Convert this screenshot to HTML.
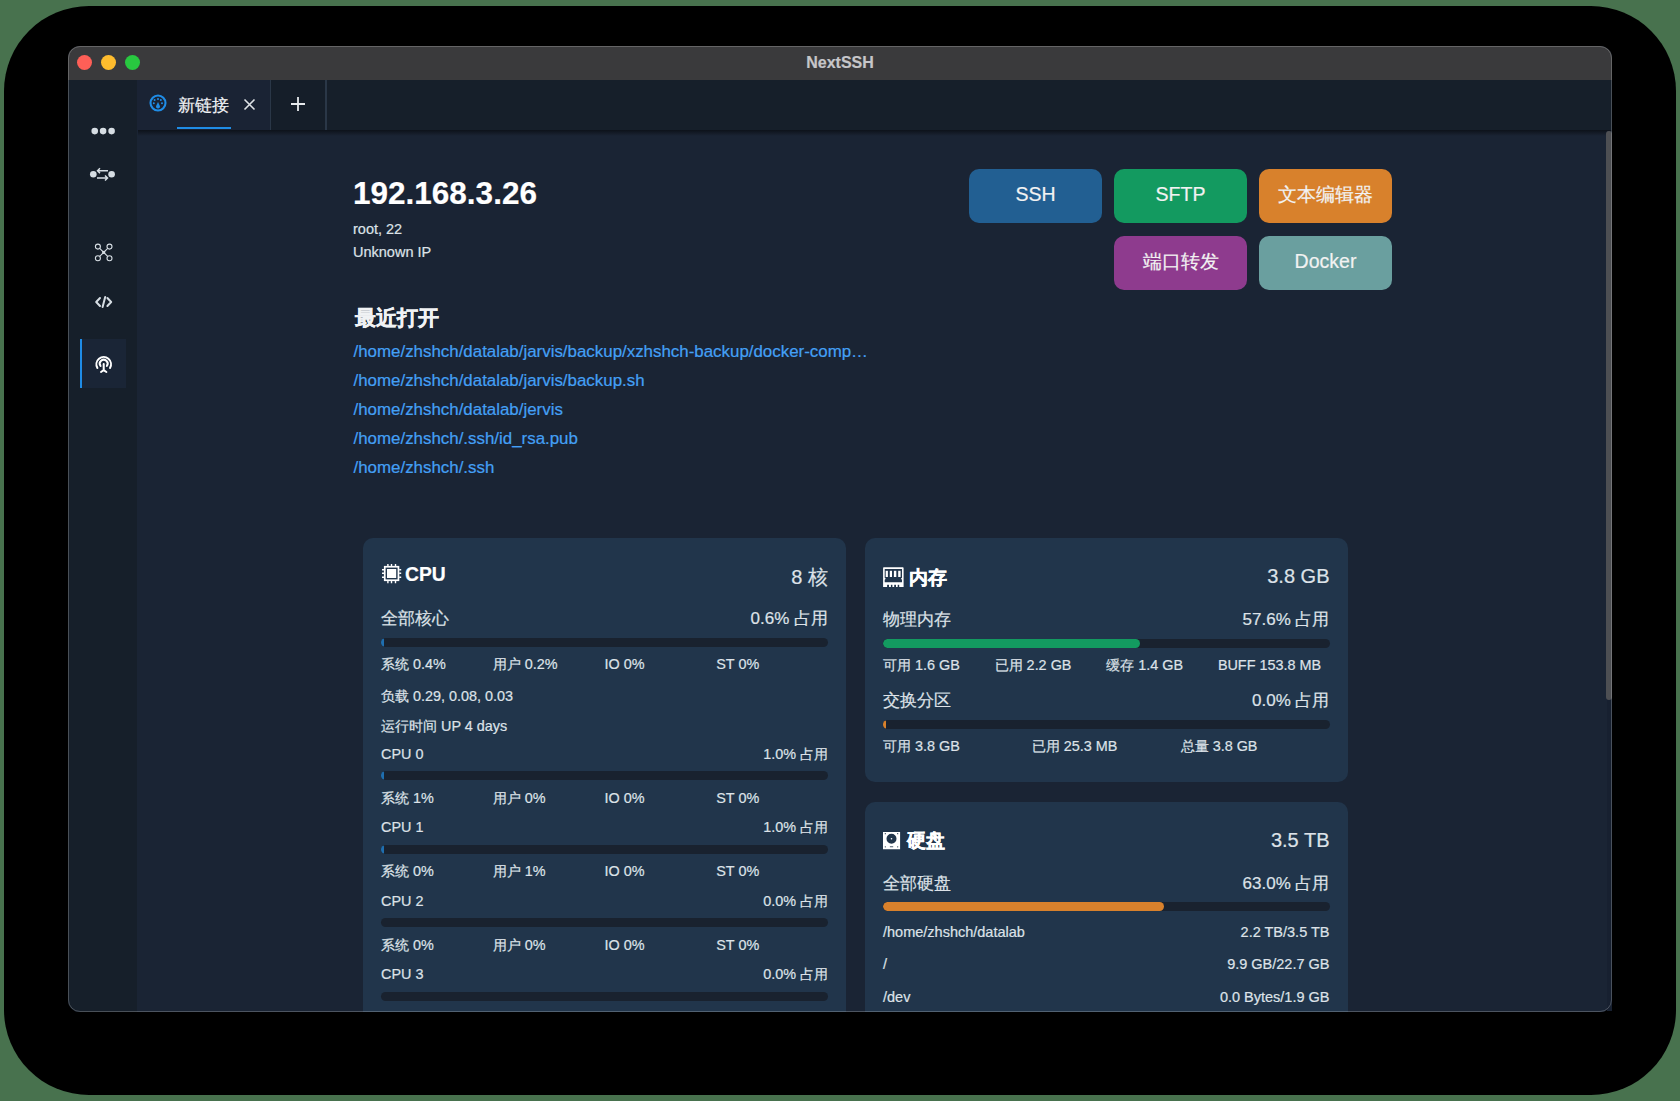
<!DOCTYPE html>
<html><head><meta charset="utf-8">
<style>
*{box-sizing:border-box;margin:0;padding:0}
html,body{width:1680px;height:1101px;overflow:hidden}
body{background:#48724e;font-family:"Liberation Sans",sans-serif;position:relative;color:#dde2e8}
#win div{-webkit-text-stroke:0.2px currentColor}
.abs{position:absolute}
#shadow{left:4px;top:6px;width:1672px;height:1089px;border-radius:85px;background:#000}
#win{left:68px;top:46px;width:1544px;height:966px;border-radius:12px;overflow:hidden;background:#1a2434}
#winborder{left:68px;top:46px;width:1544px;height:966px;border-radius:12px;border:1px solid rgba(255,255,255,0.22);pointer-events:none}
#titlebar{left:0;top:0;width:100%;height:35px;background:#3a3a3c;border-bottom:1px solid #1c1c1e}
.tl{width:15px;height:15px;border-radius:50%;top:9.1px}
#title{left:0;width:100%;top:8px;text-align:center;font-weight:bold;font-size:16px;line-height:18px;color:#c6c6c9}
#sidebar{left:0;top:34px;width:69.5px;height:932px;background:#161f2a}
#tabbar{left:69px;top:34px;width:1475px;height:50px;background:#161f2a}
#main{left:69px;top:84px;width:1475px;height:882px;background:#1a2434}
.tab1{left:0;top:0;width:134px;height:50px;background:#1a2334}
.sep{top:0;width:1.5px;height:50px;background:#2a3747}
.tabtext{left:41px;top:15.5px;font-size:17px;line-height:20px;color:#f0f2f4}
.uline{left:40px;top:47px;width:54px;height:2px;background:#1f8ce6}
.tabshadow{left:69.5px;top:84px;width:1475px;height:6px;background:linear-gradient(rgba(0,0,0,0.5),rgba(0,0,0,0.25) 50%,rgba(0,0,0,0))}
.sbicon{left:0;width:69px;text-align:center}
.active{left:11.6px;top:258.6px;width:46px;height:49px;background:#1a2536}
.activebar{left:11.6px;top:258.6px;width:2.5px;height:49px;background:#1f8ce6}
/* content */
.host{left:285px;top:129px;font-size:31.5px;font-weight:bold;color:#fff;line-height:36px}
.sub{left:285px;font-size:14.5px;color:#dde2e8;line-height:18px}
.btn{width:133px;height:54px;border-radius:10px;color:#f2f2f2;font-size:19.5px;text-align:center;line-height:51.5px}
.recent{left:286.9px;top:260.3px;font-size:21px;font-weight:bold;color:#f0f2f4;line-height:24px}
.link{left:285.5px;font-size:16.9px;color:#44a0f6;line-height:20px;white-space:nowrap}
.card{background:#21354b;border-radius:10px}
.row{position:absolute;left:18px;right:18px;display:flex;justify-content:space-between;white-space:nowrap}
.ctitle{font-size:19.3px;font-weight:bold;color:#fff;line-height:24px}
.cval{font-size:20px;color:#dde2e8;line-height:24px;position:relative;top:1.5px}
.lbl{font-size:17px;line-height:20px;color:#dde2e8;margin-top:1px}
.bar{position:absolute;left:18px;right:18px;height:9px;border-radius:5px;background:#19222f;overflow:hidden}
.fill{position:absolute;left:0;top:0;height:100%;border-radius:5px}
.grid{position:absolute;left:18px;right:18px;display:flex;font-size:14.4px;line-height:18px;color:#dde2e8;white-space:nowrap}
.grid4>div{width:25%}
.grid3>div{width:33.333%}
.sm{font-size:14.4px;line-height:18px;color:#dde2e8}
.disk{font-size:14.5px;line-height:18px}
.cjkb{-webkit-text-stroke:0.35px currentColor}
</style></head><body>
<div id="shadow" class="abs"></div>
<div id="win" class="abs">
  <div id="titlebar" class="abs">
    <div class="abs tl" style="left:8.9px;background:#fe5f57"></div>
    <div class="abs tl" style="left:33.1px;background:#febc2e"></div>
    <div class="abs tl" style="left:57.2px;background:#28c840"></div>
    <div id="title" class="abs">NextSSH</div>
  </div>
  <div id="sidebar" class="abs">
    <!-- dots -->
    <svg class="abs" style="left:20px;top:44px" width="30" height="14" viewBox="0 0 30 14">
      <circle cx="6.75" cy="7.1" r="3.3" fill="#d6dde3"/><circle cx="15.1" cy="7.1" r="3.3" fill="#d6dde3"/><circle cx="23.6" cy="7.1" r="3.3" fill="#d6dde3"/>
    </svg>
    <!-- transfer -->
    <svg class="abs" style="left:20px;top:85px" width="30" height="20" viewBox="0 0 30 20">
      <circle cx="5.3" cy="9.3" r="3.3" fill="#d6dde3"/><circle cx="23.6" cy="9.3" r="3.3" fill="#d6dde3"/>
      <path d="M9.5 5.7H20M12 3.2L9.5 5.7L12 8.2" stroke="#d6dde3" stroke-width="1.5" fill="none"/>
      <path d="M9 13H19.5M17 10.5L19.5 13L17 15.5" stroke="#d6dde3" stroke-width="1.5" fill="none"/>
    </svg>
    <!-- network -->
    <svg class="abs" style="left:20px;top:153px" width="30" height="30" viewBox="0 0 30 30">
      <g stroke="#d6dde3" stroke-width="1.1" fill="none">
      <circle cx="9.9" cy="13.6" r="2.5"/><circle cx="21.5" cy="13.6" r="2.5"/><circle cx="9.9" cy="25.2" r="2.5"/><circle cx="21.5" cy="25.2" r="2.5"/>
      <path d="M11.7 15.4L19.7 23.4M19.7 15.4L11.7 23.4"/></g>
      <rect x="14.2" y="17.9" width="3" height="3" fill="#d6dde3"/>
    </svg>
    <!-- code -->
    <svg class="abs" style="left:18px;top:206px" width="30" height="30" viewBox="0 0 30 30">
      <g stroke="#d6dde3" stroke-width="2" fill="none" stroke-linecap="round" stroke-linejoin="round">
      <path d="M14 12L10.2 16L14 20M21.4 12L25.2 16L21.4 20M19.2 11L16.6 21"/></g>
    </svg>
    <div class="abs active"></div>
    <div class="abs activebar"></div>
    <!-- broadcast -->
    <svg class="abs" style="left:18px;top:270px" width="30" height="30" viewBox="0 0 30 30">
      <g stroke="#fff" stroke-width="2" fill="none" stroke-linecap="round">
      <path d="M11.4 18A7.3 7.3 0 1 1 24 18"/>
      <path d="M14.55 16A3.9 3.9 0 1 1 20.85 16"/>
      <path d="M17.7 14V20.2M17.7 20.2L15 22M17.7 20.2L20.4 22"/></g>
    </svg>
  </div>
  <div id="tabbar" class="abs">
    <div class="abs tab1"></div>
    <svg class="abs" style="left:11.2px;top:13.2px" width="20" height="20" viewBox="0 0 20 20">
      <circle cx="10" cy="10" r="7.5" stroke="#1f8ce6" stroke-width="2.1" fill="none"/>
      <g fill="#1f8ce6"><circle cx="10" cy="6" r="1"/><circle cx="6.6" cy="7.1" r="1"/><circle cx="12.8" cy="7.1" r="1"/><circle cx="5.8" cy="10.3" r="1"/><circle cx="14" cy="10.3" r="1"/>
      <path d="M10 9L11.9 13A2 2 0 1 1 8.1 13Z"/></g>
    </svg>
    <div class="abs tabtext">新链接</div>
    <div class="abs uline"></div>
    <svg class="abs" style="left:106.3px;top:17.5px" width="13" height="13" viewBox="0 0 13 13">
      <path d="M1.5 1.5L11.5 11.5M11.5 1.5L1.5 11.5" stroke="#dfe3e7" stroke-width="1.6"/>
    </svg>
    <div class="abs sep" style="left:133px"></div>
    <div class="abs" style="left:134px;top:0;width:54px;height:50px;background:#151e29"></div>
    <svg class="abs" style="left:153px;top:16px" width="16" height="16" viewBox="0 0 16 16">
      <path d="M8 1V15M1 8H15" stroke="#e6e9ec" stroke-width="1.8"/>
    </svg>
    <div class="abs sep" style="left:188px"></div>
  </div>
  <div id="main" class="abs">
  </div>
  <div class="abs tabshadow"></div>
  <!-- content (win coords) -->
  <div class="abs host">192.168.3.26</div>
  <div class="abs sub" style="top:174px">root, 22</div>
  <div class="abs sub" style="top:197px">Unknown IP</div>

  <div class="abs btn" style="left:901px;top:123px;background:#225f92">SSH</div>
  <div class="abs btn" style="left:1046px;top:123px;background:#139a60">SFTP</div>
  <div class="abs btn" style="left:1191px;top:123px;background:#d8812c"><span style="font-size:95%">文本编辑器</span></div>
  <div class="abs btn" style="left:1046px;top:190px;background:#8e3b8e"><span style="font-size:95%">端口转发</span></div>
  <div class="abs btn" style="left:1191px;top:190px;background:#6a9f9f">Docker</div>

  <div class="abs recent"><span class="cjkb">最近打开</span></div>
  <div class="abs link" style="top:296.2px">/home/zhshch/datalab/jarvis/backup/xzhshch-backup/docker-comp…</div>
  <div class="abs link" style="top:325.2px">/home/zhshch/datalab/jarvis/backup.sh</div>
  <div class="abs link" style="top:354.2px">/home/zhshch/datalab/jervis</div>
  <div class="abs link" style="top:383.2px">/home/zhshch/.ssh/id_rsa.pub</div>
  <div class="abs link" style="top:412.2px">/home/zhshch/.ssh</div>

  <!-- CPU card -->
  <div class="abs card" style="left:295px;top:492px;width:483px;height:600px">
    <div class="row" style="top:25px">
      <div class="ctitle"><svg width="20" height="20" viewBox="0 0 20 20" style="vertical-align:-3px;margin-left:1px;margin-right:3px"><rect x="2.75" y="2.75" width="13.7" height="13.5" fill="none" stroke="#fff" stroke-width="1.7"/><rect x="5" y="5" width="9.2" height="9" fill="#fff"/><g stroke="#fff" stroke-width="1.4"><path d="M5.9 0V2M9.5 0V2M13.5 0V2M5.9 17V19.2M9.5 17V19.2M13.5 17V19.2M0 5.7H2M0 9.3H2M0 13.3H2M17.2 5.7H19.2M17.2 9.3H19.2M17.2 13.3H19.2"/></g></svg>CPU</div>
      <div class="cval">8 核</div>
    </div>
    <div class="row lbl" style="top:70px"><div>全部核心</div><div>0.6% 占用</div></div>
    <div class="bar" style="top:100px"><div class="fill" style="width:3px;background:#1f6fb0"></div></div>
    <div class="grid grid4" style="top:117px"><div>系统 0.4%</div><div>用户 0.2%</div><div>IO 0%</div><div>ST 0%</div></div>
    <div class="grid" style="top:149px">负载 0.29, 0.08, 0.03</div>
    <div class="grid" style="top:178.5px">运行时间 UP 4 days</div>
    <div class="row sm" style="top:206.8px"><div>CPU 0</div><div>1.0% 占用</div></div>
    <div class="bar" style="top:233.3px"><div class="fill" style="width:3px;background:#1f6fb0"></div></div>
    <div class="grid grid4" style="top:250.8px"><div>系统 1%</div><div>用户 0%</div><div>IO 0%</div><div>ST 0%</div></div>
    <div class="row sm" style="top:280px"><div>CPU 1</div><div>1.0% 占用</div></div>
    <div class="bar" style="top:306.5px"><div class="fill" style="width:3px;background:#1f6fb0"></div></div>
    <div class="grid grid4" style="top:324px"><div>系统 0%</div><div>用户 1%</div><div>IO 0%</div><div>ST 0%</div></div>
    <div class="row sm" style="top:353.5px"><div>CPU 2</div><div>0.0% 占用</div></div>
    <div class="bar" style="top:380.0px"><div class="fill" style="width:0px;background:#1f6fb0"></div></div>
    <div class="grid grid4" style="top:397.5px"><div>系统 0%</div><div>用户 0%</div><div>IO 0%</div><div>ST 0%</div></div>
    <div class="row sm" style="top:427px"><div>CPU 3</div><div>0.0% 占用</div></div>
    <div class="bar" style="top:453.5px"><div class="fill" style="width:0px;background:#1f6fb0"></div></div>
  </div>

  <!-- Memory card -->
  <div class="abs card" style="left:797px;top:492.4px;width:482.5px;height:243.5px">
    <div class="row" style="top:28px">
      <div class="ctitle"><svg width="21" height="20" viewBox="0 0 21 20" style="vertical-align:-3px;margin-left:0px;margin-right:4.5px"><path fill="#fff" fill-rule="evenodd" d="M0.8 0.3H19.8Q20.6 0.3 20.6 1.1V19.9H0.1V1.1Q0.1 0.3 0.8 0.3ZM1.7 2V10.8L2.8 11.8L1.7 12.8V15.2H19V12.8L17.9 11.8L19 10.8V2Z"/><g fill="#fff"><rect x="2.7" y="3.8" width="2.2" height="6.2"/><rect x="6.8" y="3.8" width="2.2" height="6.2"/><rect x="10.9" y="3.8" width="2.4" height="6.2"/><rect x="15.2" y="3.8" width="2.4" height="6.2"/></g><g fill="#21354b"><rect x="4.1" y="17.8" width="1.9" height="2.2"/><rect x="7.9" y="17.8" width="1.5" height="2.2"/><rect x="11.2" y="17.8" width="1.8" height="2.2"/><rect x="14.7" y="17.8" width="1.5" height="2.2"/></g></svg><span class="cjkb">内存</span></div>
      <div class="cval" style="top:-2px">3.8 GB</div>
    </div>
    <div class="row lbl" style="top:71px"><div>物理内存</div><div>57.6% 占用</div></div>
    <div class="bar" style="top:100.4px"><div class="fill" style="width:57.6%;background:#139a60"></div></div>
    <div class="grid grid4" style="top:118px"><div>可用 1.6 GB</div><div>已用 2.2 GB</div><div>缓存 1.4 GB</div><div>BUFF 153.8 MB</div></div>
    <div class="row lbl" style="top:152px"><div>交换分区</div><div>0.0% 占用</div></div>
    <div class="bar" style="top:181.6px"><div class="fill" style="width:3px;background:#d8812c"></div></div>
    <div class="grid grid3" style="top:198.5px"><div>可用 3.8 GB</div><div>已用 25.3 MB</div><div>总量 3.8 GB</div></div>
  </div>

  <!-- Disk card -->
  <div class="abs card" style="left:797px;top:756px;width:482.5px;height:400px">
    <div class="row" style="top:26.5px">
      <div class="ctitle"><svg width="18" height="18" viewBox="0 0 18 18" style="vertical-align:-3px;margin-right:6px"><path fill="#fff" fill-rule="evenodd" d="M0 0H17.1V17.2H0ZM8.5 1.7A5 5 0 1 0 8.5 11.7A5 5 0 1 0 8.5 1.7Z"/><circle cx="8.5" cy="6.7" r="0.8" fill="#fff"/><g fill="#21354b"><circle cx="2.3" cy="1.7" r="0.6"/><circle cx="14.7" cy="1.7" r="0.6"/><circle cx="2.3" cy="14.8" r="0.6"/><circle cx="14.7" cy="14.8" r="0.6"/><rect x="6.9" y="14.4" width="3.3" height="0.8"/></g></svg><span class="cjkb">硬盘</span></div>
      <div class="cval" style="top:-0.2px">3.5 TB</div>
    </div>
    <div class="row lbl" style="top:70.6px"><div>全部硬盘</div><div>63.0% 占用</div></div>
    <div class="bar" style="top:99.8px"><div class="fill" style="width:63%;background:#d8812c"></div></div>
    <div class="row disk" style="top:121px"><div>/home/zhshch/datalab</div><div>2.2 TB/3.5 TB</div></div>
    <div class="row disk" style="top:152.7px"><div>/</div><div>9.9 GB/22.7 GB</div></div>
    <div class="row disk" style="top:185.8px"><div>/dev</div><div>0.0 Bytes/1.9 GB</div></div>
  </div>
</div>
<div class="abs" style="left:1606.5px;top:130.5px;width:5.5px;height:880px;background:#172030"></div>
<div class="abs" style="left:1606.3px;top:130.5px;width:5.7px;height:569px;border-radius:3px;background:#4d4f53"></div>
<div id="winborder" class="abs"></div>
</body></html>
